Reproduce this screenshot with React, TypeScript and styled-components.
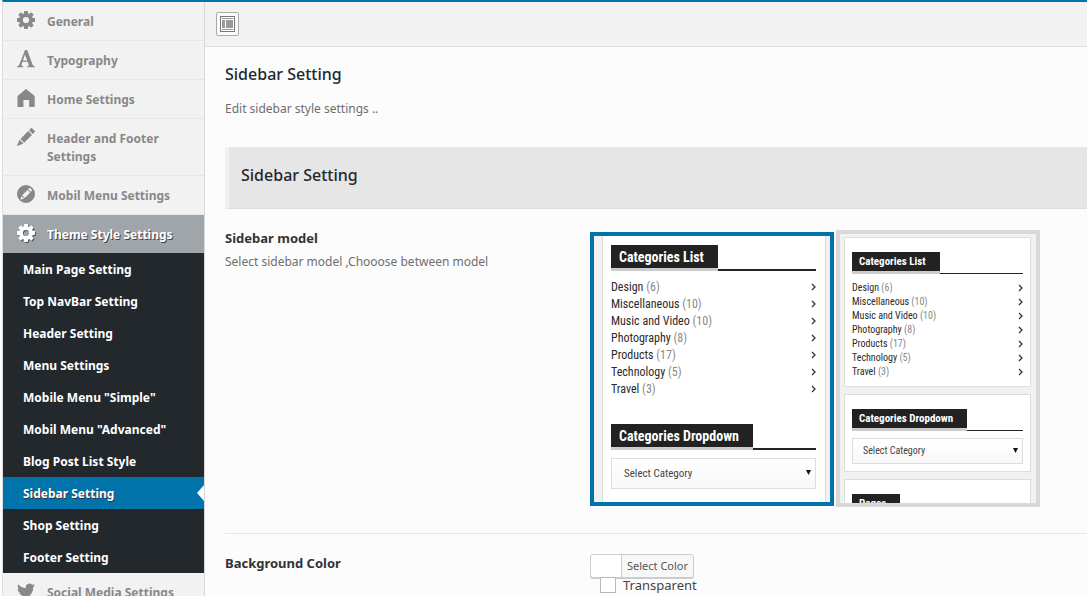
import React, { useState } from "react";
import styled, { createGlobalStyle, css } from "styled-components";

const GlobalStyle = createGlobalStyle`
  * { box-sizing: border-box; }
  html, body { margin: 0; background: #fcfcfc; }
  body {
    height: 100vh;
    overflow: hidden;
    color: #444;
    font-family: "Noto Sans", "Open Sans", sans-serif;
    font-size: 12px;
    line-height: 18px;
  }
  h2, h3, h4, p, ul { margin: 0; padding: 0; }
  ul { list-style: none; }
  button, input, select { font: inherit; margin: 0; }
`;

const Frame = styled.div`
  display: flex;
  min-height: 100vh;
  margin-left: 2px;
  border-left: 1px solid #dedede;
  border-top: 2px solid #0073aa;
`;

const Sidebar = styled.nav`
  flex: 0 0 202px;
  background: #f2f2f2;
  border-right: 1px solid #d8d8d8;
`;

const MenuLink = styled.a<{ $active?: boolean }>`
  display: flex;
  gap: 12px;
  padding: 11px 14px 9px;
  border-bottom: 1px solid #e7e7e7;
  color: #888;
  font-weight: 700;
  text-decoration: none;

  svg {
    flex: none;
    width: 18px;
    height: 18px;
    margin-top: -2px;
    fill: currentColor;
  }

  ${(p) =>
    p.$active &&
    css`
      border-bottom: 0;
      background: #a0a5aa;
      color: #fff;
      text-shadow: 1px 1px #444;
      svg {
        filter: drop-shadow(1px 1px 0 #555);
      }
    `}
`;

const Submenu = styled.ul`
  background: #23282d;
`;

const SubLink = styled.a<{ $active?: boolean }>`
  position: relative;
  display: block;
  padding: 8px 20px 6px;
  color: #fff;
  font-weight: 700;
  text-decoration: none;

  ${(p) =>
    p.$active &&
    css`
      background: #0073aa;
      text-shadow: 1px 1px #333;
      &::after {
        content: "";
        position: absolute;
        top: 8px;
        right: 0;
        border: 8px solid transparent;
        border-left-width: 0;
        border-right: 7px solid #fcfcfc;
      }
    `}
`;

const Main = styled.main`
  flex: 1;
  min-width: 0;
`;

const Toolbar = styled.div`
  padding: 10px 11px;
  background: #f2f2f2;
  border-bottom: 1px solid #dedede;
`;

const ToolButton = styled.button`
  display: flex;
  align-items: center;
  justify-content: center;
  width: 23px;
  height: 24px;
  padding: 0;
  border: 1px solid #aaa;
  border-radius: 2px;
  background: #fbfbfb;
`;

const Content = styled.div`
  padding: 15px 0 0 20px;
`;

const Heading = styled.h2`
  color: #23282d;
  font-size: 16px;
  font-weight: 500;
  line-height: 24px;
`;

const Description = styled.p`
  color: #6e6e6e;
`;

const Intro = styled.header`
  display: grid;
  gap: 14px;
  padding-bottom: 29px;
`;

const SectionBar = styled.div`
  height: 62px;
  padding: 16px 12px;
  border-left: 4px solid #f1f1f1;
  border-bottom: 1px solid #ddd;
  background: #e6e6e6;
`;

const Field = styled.section`
  display: grid;
  grid-template-columns: 365px 1fr;
  padding: 20px 0 26px;
  border-bottom: 1px solid #e7e7e7;
`;

const FieldText = styled.div`
  display: grid;
  align-content: start;
  gap: 6px;
`;

const FieldTitle = styled.h4`
  color: #333;
  font-size: 13px;
  font-weight: 700;
`;

const Models = styled.div`
  display: flex;
  align-items: center;
  gap: 2px;
  padding-top: 1px;
`;

const Model = styled.div<{ $selected: boolean; $compact?: boolean }>`
  position: relative;
  display: flex;
  flex-direction: column;
  gap: 7px;
  width: ${(p) => (p.$compact ? 204 : 244)}px;
  height: ${(p) => (p.$compact ? 277 : 274)}px;
  padding: ${(p) => (p.$compact ? "3px 5px 3px 4px" : "0 4px 0 8px")};
  border: 4px solid ${(p) => (p.$selected ? "#0073aa" : "#d9d9d9")};
  background: #f1f1f1;
  overflow: hidden;
  font-family: "Roboto Condensed", "Liberation Sans Narrow", Roboto, sans-serif;
  font-size: ${(p) => (p.$compact ? 10 : 12)}px;
  line-height: ${(p) => (p.$compact ? 14 : 17)}px;
`;

const ModelRadio = styled.input`
  position: absolute;
  inset: 0;
  width: 100%;
  height: 100%;
  opacity: 0;
  cursor: pointer;
`;

const Widget = styled.div<{ $compact?: boolean; $flush?: boolean }>`
  flex: none;
  padding: ${(p) => (p.$compact ? "14px 7px 7px" : "9px 9px 20px 8px")};
  border: 1px solid #ddd;
  border-width: ${(p) => (p.$flush ? "0 1px" : "1px")};
  background: #fff;
`;

const WidgetTitle = styled.div<{ $compact?: boolean }>`
  display: flex;
  align-items: flex-end;
  margin-bottom: ${(p) => (p.$compact ? 7 : 8)}px;

  &::after {
    content: "";
    flex: 1;
    border-bottom: ${(p) => (p.$compact ? 1 : 2)}px solid #23232b;
  }

  h3 {
    padding: ${(p) => (p.$compact ? "3px 14px 2px 7px" : "4px 14px 2px 8px")};
    border-bottom: 3px solid #ccc;
    background: #222;
    background-clip: padding-box;
    color: #fff;
    font-size: ${(p) => (p.$compact ? 11 : 14)}px;
    font-weight: 700;
    line-height: inherit;
  }
`;

const CategoryRow = styled.li`
  display: flex;
  align-items: center;
  justify-content: space-between;
  color: #2a2a2a;

  small {
    color: #888;
    font-size: inherit;
  }

  svg {
    width: 5px;
    height: 8px;
    fill: none;
    stroke: #333;
    stroke-width: 1.3;
  }
`;

const CategoryList = styled.ul<{ $compact?: boolean }>`
  padding-bottom: ${(p) => (p.$compact ? 0 : 26)}px;
`;

const SelectBox = styled.div<{ $compact?: boolean }>`
  position: relative;
  display: flex;

  select {
    flex: 1;
    height: ${(p) => (p.$compact ? 26 : 31)}px;
    padding: 0 ${(p) => (p.$compact ? 10 : 12)}px;
    appearance: none;
    border: 1px solid #ddd;
    border-radius: 0;
    background: linear-gradient(#fff, #f8f8f8);
    color: #444;
    font-size: ${(p) => (p.$compact ? 10 : 11)}px;
  }

  svg {
    position: absolute;
    top: ${(p) => (p.$compact ? 10 : 12)}px;
    right: 5px;
    width: 5px;
    height: 5px;
    fill: #111;
  }
`;

const ColorControls = styled.div`
  display: flex;
  flex-direction: column;
  align-items: flex-start;
`;

const ColorButton = styled.button`
  display: flex;
  height: 24px;
  padding: 0 0 0 30px;
  border: 1px solid #ccc;
  border-radius: 3px;
  background: #fff;
  box-shadow: 0 1px 0 #ccc;
  overflow: hidden;

  span {
    padding: 0 5px;
    border-left: 1px solid #ccc;
    background: #f7f7f7;
    color: #555;
    font-size: 11px;
    line-height: 22px;
  }
`;

const CheckLabel = styled.label`
  display: flex;
  align-items: center;
  gap: 7px;
  margin-top: -1px;
  padding-left: 10px;
  color: #444;
  font-size: 13px;
  line-height: 16px;

  input {
    position: relative;
    width: 16px;
    height: 16px;
    appearance: none;
    border: 1px solid #b4b9be;
    background: #fff;
  }
  input:checked {
    background: #0073aa;
  }
`;

const Cog = () => (
  <svg viewBox="0 0 18 18" aria-hidden="true">
    <path
      fillRule="evenodd"
      d="M7.2 0h3.6l.4 2.500 1 .4L14.300 1.300 16.700 3.700 15.100 5.800 15.500 6.800 18 7.200v3.600l-2.500.4-.4 1 1.600 2.100-2.400 2.400-2.100-1.600-1 .4-.4 2.500H7.200l-.4-2.500-1-.4-2.100 1.600-2.400-2.400 1.600-2.100-.4-1L0 10.800V7.200l2.500-.4.4-1L1.300 3.700 3.700 1.300l2.100 1.600 1-.4zM9 5.900a3.100 3.100 0 1 0 0 6.200 3.100 3.100 0 0 0 0-6.200z"
    />
  </svg>
);

const FontIcon = () => (
  <svg viewBox="0 0 18 18" aria-hidden="true">
    <path
      fillRule="evenodd"
      d="M8 0h2.200l5.400 14.800c.4 1 1 1.400 2.200 1.500v.9h-7.600v-.9c1.500-.1 1.800-.5 1.400-1.700l-1-2.900H5.500l-.8 2.300c-.5 1.400 0 2.100 1.500 2.300v.9H.2v-.9c1.300-.1 1.900-.8 2.400-2.200zM8 4.400l-2.100 6h4.300z"
    />
  </svg>
);

const HomeIcon = () => (
  <svg viewBox="0 0 18 18" aria-hidden="true">
    <path d="M9 0l8.700 7V18h-5.500v-7H6.400v7H.5V7z" />
  </svg>
);

const PencilIcon = () => (
  <svg viewBox="0 0 18 18" aria-hidden="true">
    <path d="M14 .3q.5-.5 1 0l2.800 2.800q.4.500 0 1l-2 2-3.800-3.800zM11.200 3.100l3.800 3.800-7.800 7.800-3.800-3.800zM2.600 11.700l3.800 3.800L.3 18q-.5 0-.3-.5z" />
  </svg>
);

const PencilCircleIcon = () => (
  <svg viewBox="0 0 18 18" aria-hidden="true">
    <path
      fillRule="evenodd"
      d="M9 0a9 9 0 1 1 0 18A9 9 0 0 1 9 0zM12.300 3.100l-1.100 1.100 2.600 2.600 1.100-1.100q.4-.4 0-.8l-1.800-1.800q-.4-.4-.8 0zM10.600 4.900L5.200 10.300l2.600 2.600 5.400-5.400zM4.700 11l-1.300 3.700L7.100 13.400z"
    />
  </svg>
);

const TwitterIcon = () => (
  <svg viewBox="0 0 24 24" aria-hidden="true">
    <path d="M23.950 4.570a10 10 0 0 1-2.820.77 4.960 4.960 0 0 0 2.160-2.720c-.95.550-2 .950-3.130 1.180a4.920 4.920 0 0 0-8.380 4.480C7.690 8.100 4.070 6.130 1.640 3.160a4.820 4.820 0 0 0-.67 2.480c0 1.710.87 3.210 2.190 4.100a4.900 4.900 0 0 1-2.230-.62v.06a4.920 4.920 0 0 0 3.950 4.830 5 5 0 0 1-2.210.08 4.940 4.940 0 0 0 4.600 3.420A9.870 9.870 0 0 1 0 19.540a13.990 13.990 0 0 0 7.560 2.210c9.050 0 14-7.500 14-13.980 0-.21 0-.42-.02-.63a9.940 9.940 0 0 0 2.460-2.550z" />
  </svg>
);

const LayoutIcon = () => (
  <svg width="15" height="16" viewBox="0 0 15 16" aria-hidden="true">
    <rect x=".5" y=".5" width="14" height="15" fill="#fff" stroke="#777" />
    <path fill="#999" d="M2 2h11v1H2zM2 4h3v8H2zM6 4h7v8H6zM2 13h11v1H2z" />
  </svg>
);

const menu = [
  { label: "General", Icon: Cog },
  { label: "Typography", Icon: FontIcon },
  { label: "Home Settings", Icon: HomeIcon },
  { label: "Header and Footer Settings", Icon: PencilIcon },
  { label: "Mobil Menu Settings", Icon: PencilCircleIcon },
];

const submenu = [
  "Main Page Setting",
  "Top NavBar Setting",
  "Header Setting",
  "Menu Settings",
  'Mobile Menu "Simple"',
  'Mobil Menu "Advanced"',
  "Blog Post List Style",
  "Sidebar Setting",
  "Shop Setting",
  "Footer Setting",
];

const categories: [string, number][] = [
  ["Design", 6],
  ["Miscellaneous", 10],
  ["Music and Video", 10],
  ["Photography", 8],
  ["Products", 17],
  ["Technology", 5],
  ["Travel", 3],
];

function Categories({ compact }: { compact?: boolean }) {
  return (
    <>
      <WidgetTitle $compact={compact}>
        <h3>Categories List</h3>
      </WidgetTitle>
      <CategoryList $compact={compact}>
        {categories.map(([name, count]) => (
          <CategoryRow key={name}>
            <span>
              {name} <small>({count})</small>
            </span>
            <svg viewBox="0 0 5 8" aria-hidden="true">
              <path d="M1 1l3 3-3 3" />
            </svg>
          </CategoryRow>
        ))}
      </CategoryList>
    </>
  );
}

function CategoryDropdown({ compact }: { compact?: boolean }) {
  return (
    <>
      <WidgetTitle $compact={compact}>
        <h3>Categories Dropdown</h3>
      </WidgetTitle>
      <SelectBox $compact={compact}>
        <select aria-label="Categories Dropdown">
          <option>Select Category</option>
        </select>
        <svg viewBox="0 0 6 6" aria-hidden="true">
          <path d="M0 0h6L3 6z" />
        </svg>
      </SelectBox>
    </>
  );
}

export default function App() {
  const [model, setModel] = useState("joined");
  return (
    <>
      <GlobalStyle />
      <Frame>
        <Sidebar>
          {menu.map(({ label, Icon }) => (
            <MenuLink key={label} href="#">
              <Icon />
              <span>{label}</span>
            </MenuLink>
          ))}
          <MenuLink href="#" $active>
            <Cog />
            <span>Theme Style Settings</span>
          </MenuLink>
          <Submenu>
            {submenu.map((label) => (
              <li key={label}>
                <SubLink href="#" $active={label === "Sidebar Setting"}>
                  {label}
                </SubLink>
              </li>
            ))}
          </Submenu>
          <MenuLink href="#">
            <TwitterIcon />
            <span>Social Media Settings</span>
          </MenuLink>
        </Sidebar>
        <Main>
          <Toolbar>
            <ToolButton type="button" aria-label="Expand options">
              <LayoutIcon />
            </ToolButton>
          </Toolbar>
          <Content>
            <Intro>
              <Heading>Sidebar Setting</Heading>
              <Description>Edit sidebar style settings ..</Description>
            </Intro>
            <SectionBar>
              <Heading as="h3">Sidebar Setting</Heading>
            </SectionBar>
            <Field>
              <FieldText>
                <FieldTitle>Sidebar model</FieldTitle>
                <Description>Select sidebar model ,Chooose between model</Description>
              </FieldText>
              <Models>
                <Model $selected={model === "joined"}>
                  <Widget $flush>
                    <Categories />
                    <CategoryDropdown />
                  </Widget>
                  <ModelRadio
                    type="radio"
                    name="model"
                    aria-label="Joined widgets"
                    checked={model === "joined"}
                    onChange={() => setModel("joined")}
                  />
                </Model>
                <Model $compact $selected={model === "boxed"}>
                  <Widget $compact>
                    <Categories compact />
                  </Widget>
                  <Widget $compact>
                    <CategoryDropdown compact />
                  </Widget>
                  <Widget $compact>
                    <WidgetTitle $compact>
                      <h3>Pages</h3>
                    </WidgetTitle>
                  </Widget>
                  <ModelRadio
                    type="radio"
                    name="model"
                    aria-label="Boxed widgets"
                    checked={model === "boxed"}
                    onChange={() => setModel("boxed")}
                  />
                </Model>
              </Models>
            </Field>
            <Field>
              <FieldText>
                <FieldTitle>Background Color</FieldTitle>
              </FieldText>
              <ColorControls>
                <ColorButton type="button">
                  <span>Select Color</span>
                </ColorButton>
                <CheckLabel>
                  <input type="checkbox" />
                  Transparent
                </CheckLabel>
              </ColorControls>
            </Field>
          </Content>
        </Main>
      </Frame>
    </>
  );
}
